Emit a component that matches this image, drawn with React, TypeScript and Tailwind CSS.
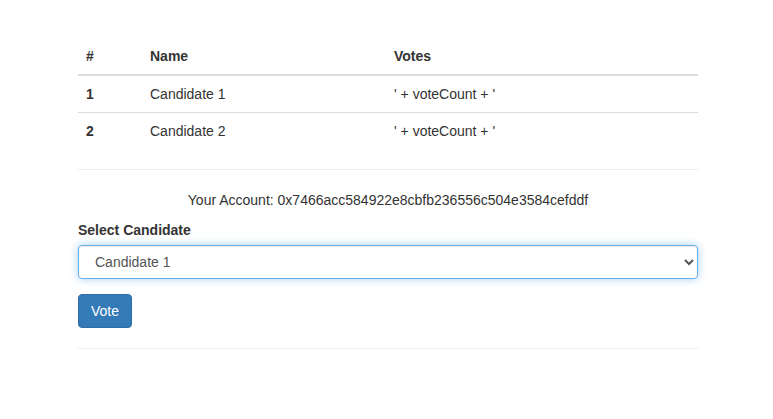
import React from "react";

const candidates = [
  { id: 1, name: "Candidate 1" },
  { id: 2, name: "Candidate 2" },
];

export default function App() {
  const [selected, setSelected] = React.useState("1");

  return (
    <div className="min-h-screen bg-white text-[14px] leading-5 text-[#333] [font-family:'Liberation_Sans',Arial,sans-serif]">
      <div className="ml-[78px] w-[620px] pt-[38px]">
        {/* results table */}
        <div className="grid grid-cols-[64px_244px_312px]">
          <div className="border-b-2 border-[#ddd] p-2 font-bold">#</div>
          <div className="border-b-2 border-[#ddd] p-2 font-bold">Name</div>
          <div className="border-b-2 border-[#ddd] p-2 font-bold">Votes</div>
          {candidates.map((c, i) => (
            <React.Fragment key={c.id}>
              <div className={i === 0 ? "border-b border-[#ddd] p-2 font-bold" : "p-2 font-bold"}>{c.id}</div>
              <div className={i === 0 ? "border-b border-[#ddd] p-2" : "p-2"}>{c.name}</div>
              <div className={i === 0 ? "border-b border-[#ddd] p-2" : "p-2"}>' + voteCount + '</div>
            </React.Fragment>
          ))}
        </div>

        <hr className="mt-5 border-t border-[#eee]" />

        <p className="mt-5 mb-[10px] text-center">Your Account: 0x7466acc584922e8cbfb236556c504e3584cefddf</p>

        <form onSubmit={e => e.preventDefault()}>
          <div className="mb-[15px]">
            <label htmlFor="candidatesSelect" className="mb-[5px] inline-block font-bold">
              Select Candidate
            </label>
            <select
              id="candidatesSelect"
              value={selected}
              onChange={e => setSelected(e.target.value)}
              className="block h-[34px] w-full rounded border border-[#66afe9] bg-white px-3 text-[14px] text-[#555] shadow-[inset_0_1px_1px_rgba(0,0,0,0.075),0_0_8px_rgba(102,175,233,0.6)] outline-none"
            >
              {candidates.map(c => (
                <option key={c.id} value={String(c.id)}>
                  {c.name}
                </option>
              ))}
            </select>
          </div>
          <button
            type="submit"
            className="h-[34px] rounded border border-[#2e6da4] bg-[#337ab7] px-3 text-[14px] text-white"
          >
            Vote
          </button>
        </form>

        <hr className="mt-5 border-t border-[#eee]" />
      </div>
    </div>
  );
}
